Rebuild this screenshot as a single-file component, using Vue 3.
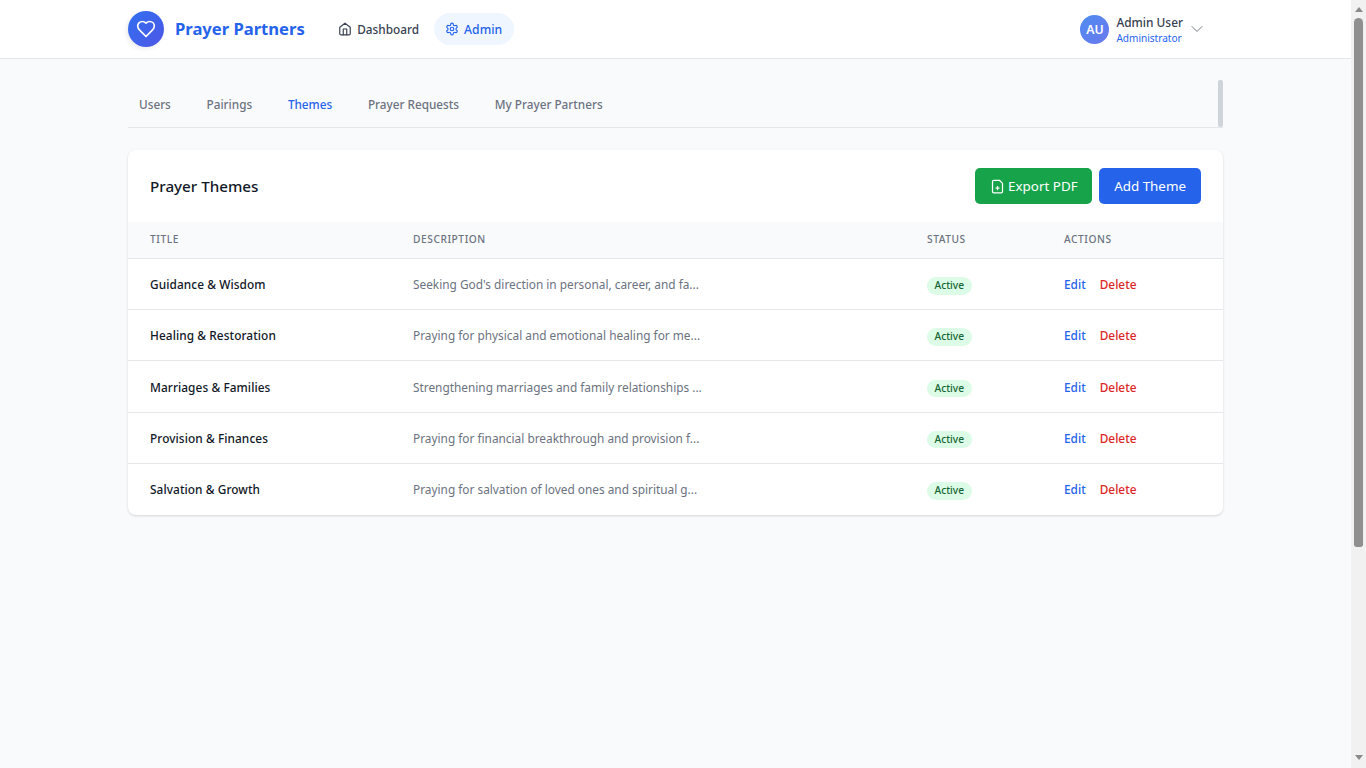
<script setup>
const tabs = ["Users", "Pairings", "Themes", "Prayer Requests", "My Prayer Partners"];

const themes = [
  { title: "Guidance & Wisdom", text: "Seeking God's direction in personal, career, and fa..." },
  { title: "Healing & Restoration", text: "Praying for physical and emotional healing for me..." },
  { title: "Marriages & Families", text: "Strengthening marriages and family relationships ..." },
  { title: "Provision & Finances", text: "Praying for financial breakthrough and provision f..." },
  { title: "Salvation & Growth", text: "Praying for salvation of loved ones and spiritual g..." },
];
</script>

<template>
  <div class="shell">
    <div class="page">
      <header class="topbar">
        <div class="topbar-inner">
          <div class="brand">
            <span class="logo">
              <svg width="20" height="20" viewBox="0 0 24 24" fill="none" stroke="#fff" stroke-width="2" stroke-linecap="round" stroke-linejoin="round">
                <path d="M19 14c1.49-1.46 3-3.21 3-5.5A5.5 5.5 0 0 0 16.5 3c-1.76 0-3 .5-4.5 2-1.5-1.5-2.74-2-4.5-2A5.5 5.5 0 0 0 2 8.5c0 2.3 1.5 4.05 3 5.5l7 7Z" />
              </svg>
            </span>
            <span class="brand-name">Prayer Partners</span>
          </div>
          <nav class="mainnav">
            <a class="navlink">
              <svg width="14" height="14" viewBox="0 0 24 24" fill="none" stroke="currentColor" stroke-width="2" stroke-linecap="round" stroke-linejoin="round">
                <path d="m3 9 9-7 9 7v11a2 2 0 0 1-2 2H5a2 2 0 0 1-2-2z" />
                <polyline points="9 22 9 12 15 12 15 22" />
              </svg>
              Dashboard
            </a>
            <a class="navlink active">
              <svg width="14" height="14" viewBox="0 0 24 24" fill="none" stroke="currentColor" stroke-width="2" stroke-linecap="round" stroke-linejoin="round">
                <path d="M12.22 2h-.44a2 2 0 0 0-2 2v.18a2 2 0 0 1-1 1.73l-.43.25a2 2 0 0 1-2 0l-.15-.08a2 2 0 0 0-2.73.73l-.22.38a2 2 0 0 0 .73 2.73l.15.1a2 2 0 0 1 1 1.72v.51a2 2 0 0 1-1 1.74l-.15.09a2 2 0 0 0-.73 2.73l.22.38a2 2 0 0 0 2.73.73l.15-.08a2 2 0 0 1 2 0l.43.25a2 2 0 0 1 1 1.73V20a2 2 0 0 0 2 2h.44a2 2 0 0 0 2-2v-.18a2 2 0 0 1 1-1.73l.43-.25a2 2 0 0 1 2 0l.15.08a2 2 0 0 0 2.73-.73l.22-.39a2 2 0 0 0-.73-2.73l-.15-.08a2 2 0 0 1-1-1.74v-.5a2 2 0 0 1 1-1.74l.15-.09a2 2 0 0 0 .73-2.73l-.22-.38a2 2 0 0 0-2.73-.73l-.15.08a2 2 0 0 1-2 0l-.43-.25a2 2 0 0 1-1-1.73V4a2 2 0 0 0-2-2z" />
                <circle cx="12" cy="12" r="3" />
              </svg>
              Admin
            </a>
          </nav>
          <div class="usermenu">
            <span class="avatar">AU</span>
            <span class="userinfo">
              <span class="username">Admin User</span>
              <span class="userrole">Administrator</span>
            </span>
            <svg class="chevron" width="20" height="20" viewBox="0 0 24 24" fill="none" stroke="currentColor" stroke-width="1.1" stroke-linecap="round" stroke-linejoin="round">
              <path d="m6 9 6 6 6-6" />
            </svg>
          </div>
        </div>
      </header>

      <main class="content">
        <div class="tabs">
          <a v-for="tab in tabs" :key="tab" class="tab" :class="{ current: tab === 'Themes' }">{{ tab }}</a>
          <span class="tabs-thumb"></span>
        </div>

        <section class="card">
          <div class="card-head">
            <h2>Prayer Themes</h2>
            <div class="card-actions">
              <button class="btn green">
                <svg width="15" height="15" viewBox="0 0 24 24" fill="none" stroke="currentColor" stroke-width="2" stroke-linecap="round" stroke-linejoin="round">
                  <path d="M15 2H6a2 2 0 0 0-2 2v16a2 2 0 0 0 2 2h12a2 2 0 0 0 2-2V7Z" />
                  <path d="M9.5 14.5h5" />
                  <path d="M12 12v5" />
                </svg>
                Export PDF
              </button>
              <button class="btn blue">Add Theme</button>
            </div>
          </div>
          <table>
            <thead>
              <tr>
                <th class="c-title">Title</th>
                <th class="c-desc">Description</th>
                <th class="c-status">Status</th>
                <th>Actions</th>
              </tr>
            </thead>
            <tbody>
              <tr v-for="theme in themes" :key="theme.title">
                <td class="name">{{ theme.title }}</td>
                <td class="desc">{{ theme.text }}</td>
                <td><span class="badge">Active</span></td>
                <td>
                  <a class="edit">Edit</a>
                  <a class="delete">Delete</a>
                </td>
              </tr>
            </tbody>
          </table>
        </section>
      </main>
    </div>

    <div class="scrollbar">
      <span class="arrow up"></span>
      <div class="track"><span class="thumb"></span></div>
      <span class="arrow down"></span>
    </div>
  </div>
</template>

<style>
html, body {
  margin: 0;
  height: 100%;
  overflow: hidden;
}
</style>

<style scoped>
.shell {
  display: flex;
  height: 768px;
  font-family: "Noto Sans", sans-serif;
  color: #111827;
}

.page {
  flex: 1;
  min-width: 0;
  background: #f9fafb;
}

/* top bar */

.topbar {
  background: #fff;
  border-bottom: 1px solid #e5e7eb;
  height: 58px;
}

.topbar-inner {
  display: flex;
  align-items: center;
  height: 100%;
  padding: 0 144px 0 128px;
}

.brand {
  display: flex;
  align-items: center;
  gap: 11px;
}

.logo {
  width: 36px;
  height: 36px;
  border-radius: 50%;
  background: linear-gradient(135deg, #3070f0, #4f56e6);
  box-shadow: -2px 2px 4px rgba(0, 0, 0, 0.08);
  display: flex;
  align-items: center;
  justify-content: center;
}

.brand-name {
  margin-bottom: 2px;
  font-size: 16.6px;
  font-weight: 700;
  color: #2563eb;
}

.mainnav {
  display: flex;
  align-items: center;
  gap: 3px;
  margin-left: 22px;
}

.navlink {
  display: flex;
  align-items: center;
  gap: 5px;
  height: 32px;
  padding: 0 11.5px;
  border-radius: 16px;
  font-size: 11.8px;
  font-weight: 500;
  color: #374151;
}

.navlink.active {
  background: #eff6ff;
  color: #2563eb;
  font-size: 12.2px;
}

.usermenu {
  display: flex;
  align-items: center;
  margin-left: auto;
}

.avatar {
  width: 29px;
  height: 29px;
  border-radius: 50%;
  background: linear-gradient(135deg, #4f8cf0, #6a78ee);
  color: #fff;
  font-size: 12.25px;
  font-weight: 600;
  display: flex;
  align-items: center;
  justify-content: center;
}

.userinfo {
  display: flex;
  flex-direction: column;
  margin-left: 7px;
}

.username {
  font-size: 11.9px;
  font-weight: 500;
  line-height: 16px;
  color: #374151;
}

.userrole {
  margin-top: 1px;
  font-size: 10.05px;
  line-height: 14px;
  color: #2563eb;
}

.chevron {
  margin-left: 4px;
  color: #6b7280;
}

/* tabs */

.content {
  padding: 21px 128px 0;
}

.tabs {
  position: relative;
  display: flex;
  gap: 35.75px;
  height: 46px;
  padding: 1px 11px 0;
  align-items: center;
  border-bottom: 1px solid #e5e7eb;
}

.tab {
  font-size: 11.75px;
  font-weight: 500;
  color: #6b7280;
}

.tab.current {
  color: #2563eb;
}

.tabs-thumb {
  position: absolute;
  top: 0;
  right: 0;
  width: 5px;
  height: 47px;
  border-radius: 2px;
  background: #ced4da;
}

/* card */

.card {
  margin-top: 22px;
  background: #fff;
  border-radius: 8px;
  box-shadow: 0 1px 3px rgba(0, 0, 0, 0.1), 0 1px 2px rgba(0, 0, 0, 0.06);
  overflow: hidden;
}

.card-head {
  display: flex;
  align-items: center;
  justify-content: space-between;
  height: 72px;
  padding: 0 22px;
}

h2 {
  margin: 0;
  font-size: 15.2px;
  font-weight: 500;
  color: #111827;
}

.card-actions {
  display: flex;
  gap: 7px;
}

.btn {
  display: flex;
  align-items: center;
  gap: 3.5px;
  height: 36px;
  padding: 0 14.5px;
  border: 0;
  border-radius: 5px;
  color: #fff;
  font-family: inherit;
  font-size: 13.4px;
  font-weight: 400;
}

.btn.green {
  background: #16a34a;
}

.btn.blue {
  padding: 0 15px;
  background: #2563eb;
}

table {
  width: 100%;
  border-collapse: collapse;
  table-layout: fixed;
}

th {
  height: 33.8px;
  padding: 0 22px 2px;
  background: #f9fafb;
  border-bottom: 1px solid #e5e7eb;
  text-align: left;
  font-size: 10.2px;
  font-weight: 500;
  letter-spacing: 0.56px;
  text-transform: uppercase;
  color: #6b7280;
}

.c-title {
  width: 219px;
}

.c-desc {
  width: 470px;
}

.c-status {
  width: 93px;
}

td {
  height: 50.3px;
  padding: 0 22px;
  border-bottom: 1px solid #e5e7eb;
  font-size: 11.85px;
}

tbody tr:last-child td {
  padding-bottom: 1px;
  border-bottom: 0;
}

.name {
  font-weight: 500;
  letter-spacing: 0.08px;
  color: #111827;
}

.desc {
  color: #6b7280;
}

.badge {
  display: inline-block;
  position: relative;
  top: 1.4px;
  padding: 0 7.5px;
  border-radius: 9px;
  background: #dcfce7;
  color: #166534;
  font-size: 10.2px;
  font-weight: 500;
  line-height: 17.5px;
}

.edit {
  color: #2563eb;
  font-weight: 500;
}

.delete {
  margin-left: 14px;
  color: #dc2626;
  font-weight: 500;
}

/* page scrollbar, the shot shows the browser's own */

.scrollbar {
  width: 15px;
  background: #f1f1f1;
  display: flex;
  flex-direction: column;
  align-items: center;
}

.arrow {
  width: 0;
  height: 0;
  flex: none;
  border-left: 4px solid transparent;
  border-right: 4px solid transparent;
}

.arrow.up {
  margin: 7px 0 6px;
  border-bottom: 5px solid #8a8a8a;
}

.arrow.down {
  margin: 5px 0 8px;
  border-top: 5px solid #8a8a8a;
}

.track {
  flex: 1;
  width: 100%;
  display: flex;
  justify-content: center;
}

.thumb {
  width: 9px;
  height: 529px;
  border-radius: 5px 5px 3px 3px;
  background: #8f8f8f;
}
</style>
